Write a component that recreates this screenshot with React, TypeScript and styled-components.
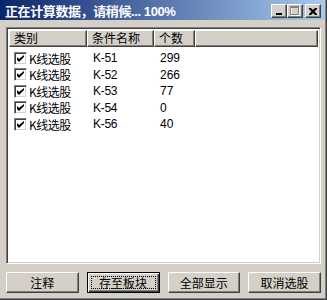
import styled, { createGlobalStyle } from 'styled-components';

const GlobalStyle = createGlobalStyle`
  html, body {
    margin: 0;
    padding: 0;
    background: #d4d0c8;
  }
  body {
    font-family: "Noto Sans CJK SC", "Liberation Sans", sans-serif;
    font-size: 12px;
    color: #000;
  }
`;

const rows = [
  { kind: 'K线选股', name: 'K-51', count: '299' },
  { kind: 'K线选股', name: 'K-52', count: '266' },
  { kind: 'K线选股', name: 'K-53', count: '77' },
  { kind: 'K线选股', name: 'K-54', count: '0' },
  { kind: 'K线选股', name: 'K-56', count: '40' },
];

const columns = [
  { title: '类别', width: 78 },
  { title: '条件名称', width: 67 },
  { title: '个数', width: 41 },
];

const buttons = ['注释', '存至板块', '全部显示', '取消选股'];

const App = () => {
  return (
    <>
      <GlobalStyle />
      <Window>
        <TitleBar>
          <TitleText>正在计算数据，请稍候... 100%</TitleText>
          <Controls>
            <CtrlButton>
              <svg width="8" height="7" viewBox="0 0 8 7">
                <rect x="1" y="5" width="6" height="2" fill="#000" />
              </svg>
            </CtrlButton>
            <CtrlButton>
              <svg width="10" height="10" viewBox="0 0 10 10">
                <rect x="1.5" y="1.5" width="8" height="8" fill="none" stroke="#fff" />
                <rect x="0.5" y="0.5" width="8" height="8" fill="none" stroke="#808080" />
                <rect x="0" y="1" width="9" height="1" fill="#808080" />
              </svg>
            </CtrlButton>
            <CloseButton>
              <svg width="8" height="7" viewBox="0 0 8 7">
                <path d="M0 0h2l2 2 2-2h2v1l-2.5 2.5L8 6v1H6L4 5 2 7H0V6l2.5-2.5L0 1z" fill="#000" />
              </svg>
            </CloseButton>
          </Controls>
        </TitleBar>
        <Body>
          <ListBox>
            <HeaderRow>
              {columns.map((c) => (
                <HeaderCell key={c.title} $width={c.width}>
                  {c.title}
                </HeaderCell>
              ))}
              <HeaderFill />
            </HeaderRow>
            <Rows>
              {rows.map((r, idx) => (
                <Row key={idx}>
                  <Cell $width={78}>
                    <CheckBox>
                      <svg width="7" height="7" viewBox="0 0 7 7">
                        <path d="M0 2v3l2 2 5-5V-0L2 4z" fill="#000" />
                      </svg>
                    </CheckBox>
                    <KindText>{r.kind}</KindText>
                  </Cell>
                  <Cell $width={67}>
                    <NameText>{r.name}</NameText>
                  </Cell>
                  <Cell $width={41}>
                    <CountText>{r.count}</CountText>
                  </Cell>
                </Row>
              ))}
            </Rows>
          </ListBox>
          <ButtonRow>
            {buttons.map((b, idx) => (
              <PushButton key={b} $focused={idx === 1}>
                <ButtonLabel $focused={idx === 1}>{b}</ButtonLabel>
              </PushButton>
            ))}
          </ButtonRow>
        </Body>
      </Window>
    </>
  );
};

export default App;

const Window = styled.div`
  width: 327px;
  height: 300px;
  box-sizing: border-box;
  background: #d4d0c8;
  border-right: 1px solid #404040;
  border-bottom: 1px solid #404040;
  box-shadow: inset -1px -1px 0 #808080;
  display: flex;
  flex-direction: column;
`;

const TitleBar = styled.div`
  height: 20px;
  flex-shrink: 0;
  background: linear-gradient(to right, #0a246a, #a6caf0);
  display: flex;
  align-items: center;
  padding: 0 4px 0 5px;
  margin-right: 1px;
`;

const TitleText = styled.div`
  flex: 1;
  color: #fff;
  font-weight: bold;
  font-size: 13px;
  font-family: "Liberation Sans", "Noto Sans CJK SC", sans-serif;
  white-space: nowrap;
  letter-spacing: -0.4px;
`;

const Controls = styled.div`
  display: flex;
  align-items: center;
  margin-top: 2px;
`;

const CtrlButton = styled.div`
  width: 16px;
  height: 14px;
  box-sizing: border-box;
  background: #d4d0c8;
  border-top: 1px solid #fff;
  border-left: 1px solid #fff;
  border-right: 1px solid #404040;
  border-bottom: 1px solid #404040;
  box-shadow: inset -1px -1px 0 #808080;
  display: flex;
  align-items: center;
  justify-content: center;
`;

const CloseButton = styled(CtrlButton)`
  margin-left: 2px;
`;

const Body = styled.div`
  flex: 1;
  display: flex;
  flex-direction: column;
  padding: 7px 5px 0 6px;
`;

const ListBox = styled.div`
  height: 237px;
  box-sizing: border-box;
  background: #fff;
  border-top: 1px solid #808080;
  border-left: 1px solid #808080;
  border-right: 1px solid #fff;
  border-bottom: 1px solid #fff;
  box-shadow: inset 1px 1px 0 #404040, inset -1px -1px 0 #d4d0c8;
  padding: 2px;
  overflow: hidden;
`;

const HeaderRow = styled.div`
  display: flex;
  height: 17px;
`;

const HeaderCell = styled.div<{ $width: number }>`
  width: ${(p) => p.$width}px;
  box-sizing: border-box;
  background: #d4d0c8;
  border-top: 1px solid #fff;
  border-left: 1px solid #fff;
  border-right: 1px solid #404040;
  border-bottom: 1px solid #404040;
  box-shadow: inset -1px -1px 0 #808080;
  padding-left: 4px;
  line-height: 14px;
  font-size: 12px;
  white-space: nowrap;
`;

const HeaderFill = styled(HeaderCell).attrs({ $width: 0 })`
  flex: 1;
`;

const Rows = styled.div`
  padding-top: 3px;
  display: flex;
  flex-direction: column;
`;

const Row = styled.div`
  display: flex;
  height: 16.5px;
  align-items: center;
`;

const Cell = styled.div<{ $width: number }>`
  width: ${(p) => p.$width}px;
  display: flex;
  align-items: center;
  padding-left: 5px;
  box-sizing: border-box;
  white-space: nowrap;
`;

const CheckBox = styled.div`
  width: 13px;
  height: 13px;
  box-sizing: border-box;
  background: #fff;
  border-top: 1px solid #808080;
  border-left: 1px solid #808080;
  border-right: 1px solid #fff;
  border-bottom: 1px solid #fff;
  box-shadow: inset 1px 1px 0 #404040, inset -1px -1px 0 #d4d0c8;
  display: flex;
  align-items: center;
  justify-content: center;
  flex-shrink: 0;
`;

const KindText = styled.span`
  margin-left: 2px;
  font-size: 12px;
  letter-spacing: -0.5px;
`;

const NameText = styled.span`
  font-family: "Liberation Sans", sans-serif;
  font-size: 12px;
  padding-left: 1px;
  letter-spacing: -0.3px;
`;

const CountText = styled.span`
  font-family: "Liberation Sans", sans-serif;
  font-size: 12px;
  padding-left: 1px;
`;

const ButtonRow = styled.div`
  display: flex;
  gap: 8px;
  margin-top: 8px;
`;

const PushButton = styled.div<{ $focused: boolean }>`
  width: 73px;
  height: 21px;
  box-sizing: border-box;
  background: #d4d0c8;
  display: flex;
  align-items: center;
  justify-content: center;
  border: 1px solid;
  border-color: ${(p) => (p.$focused ? '#000' : '#fff #404040 #404040 #fff')};
  box-shadow: ${(p) =>
    p.$focused
      ? 'inset 1px 1px 0 #fff, inset -1px -1px 0 #404040, inset -2px -2px 0 #808080'
      : 'inset -1px -1px 0 #808080'};
  padding: 3px;
  font-size: 12px;
`;

const ButtonLabel = styled.div<{ $focused: boolean }>`
  flex: 1;
  align-self: stretch;
  display: flex;
  align-items: center;
  justify-content: center;
  border: 1px dotted ${(p) => (p.$focused ? '#000' : 'transparent')};
  line-height: 1;
`;
